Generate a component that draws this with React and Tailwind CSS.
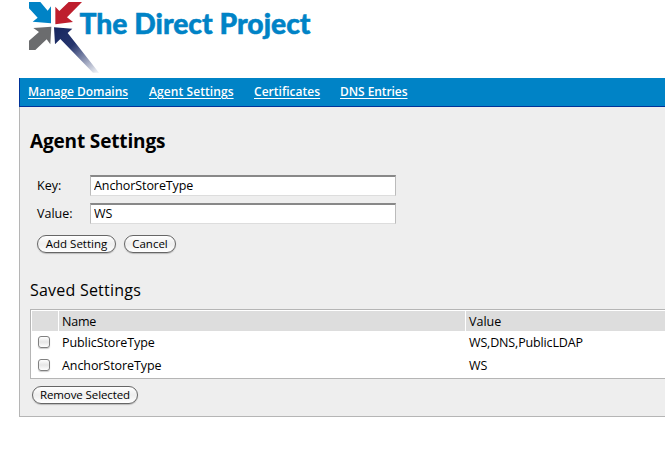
const links = [
  { label: 'Manage Domains', cls: 'w-[121px] tracking-[-0.04px]' },
  { label: 'Agent Settings', cls: 'w-[105px] tracking-[0.08px]' },
  { label: 'Certificates', cls: 'w-[86px] tracking-[0.02px]' },
  { label: 'DNS Entries', cls: 'w-[80px] tracking-[-0.07px]' },
];

const rows = [
  { name: 'PublicStoreType', value: 'WS,DNS,PublicLDAP' },
  { name: 'AnchorStoreType', value: 'WS' },
];

function Logo() {
  return (
    <svg width="320" height="78" viewBox="0 0 320 78" className="block">
      <defs>
        <linearGradient id="tail" gradientUnits="userSpaceOnUse" x1="90" y1="85" x2="212" y2="220">
          <stop offset="0" stopColor="#17265f" />
          <stop offset="0.4" stopColor="#26356d" />
          <stop offset="1" stopColor="#eceef3" />
        </linearGradient>
      </defs>
      <g transform="translate(25 0) scale(0.33333)">
        <path fill="#0083c6" d="M12 6H46L68 32L78 19V70L23 65L38 53L12 25Z" />
        <path fill="#be1e2d" d="M131 6H171L126 52L144 66L91 73V20L103 33Z" />
        <path fill="#6b6c6e" d="M25 84L79 80L76 133L65 118L31 150H12V122L42 96Z" />
        <path fill="url(#tail)" d="M87 82L142 86L128 99L222 218H204L106 117L90 133Z" />
      </g>
      <text x="79.5" y="34" textLength="231" lengthAdjust="spacingAndGlyphs" fontSize="28" strokeWidth="0.5" className="fill-[#0083c6] stroke-[#0083c6] font-['Lato',sans-serif] font-black">The Direct Project</text>
    </svg>
  );
}

function Button({ children, className }) {
  return (
    <button className={`flex h-[18px] items-center justify-center whitespace-nowrap rounded-full border border-[#666] bg-linear-to-b from-white via-[#eee] to-white text-[11.5px] font-medium leading-none shadow-[0_1px_1px_#bbb] ${className}`}>
      {children}
    </button>
  );
}

function Field({ label, value }) {
  return (
    <label className="flex h-7 items-start">
      <span className="w-[53px] pt-px leading-[20px]">{label}</span>
      <input
        defaultValue={value}
        className="h-[21px] w-[306px] border border-t-2 border-[#bbb] border-t-[#888] border-b-[#ddd] bg-white px-[3px] pb-px tracking-[-0.09px] outline-none"
      />
    </label>
  );
}

export default function App() {
  return (
    <div className="h-[464px] w-[665px] overflow-hidden bg-white font-['Open_Sans','Noto_Sans',sans-serif] text-[12.5px] text-black">
      <header className="h-[78px]"><Logo /></header>
      <div className="ml-[19px] h-[339px] border-b border-l border-[#b5b5b5] bg-[#eee]">
        <nav className="-ml-px flex h-[29px] border-b border-l border-[#003399] bg-[#0083c6] pl-2 text-[12px] font-semibold leading-[27px] text-white">
          {links.map((l) => (
            <a key={l.label} className={`block whitespace-nowrap underline underline-offset-2 ${l.cls}`}>{l.label}</a>
          ))}
        </nav>
        <main className="pl-[10px]">
          <h1 className="h-[68px] pt-[21px] text-[19px] font-bold leading-[27px] tracking-[-0.15px]">Agent Settings</h1>
          <form className="pl-[7px]">
            <Field label="Key:" value="AnchorStoreType" />
            <Field label="Value:" value="WS" />
            <div className="flex gap-2 pt-[4px]">
              <Button className="w-[79px]">Add Setting</Button>
              <Button className="w-[52px]">Cancel</Button>
            </div>
          </form>
          <h2 className="h-[56px] pt-[26px] text-[16px] leading-[22px] tracking-[0.22px]">Saved Settings</h2>
          <table className="h-[70px] w-[700px] table-fixed border-separate border-spacing-0 border border-[#b5b5b5] bg-white text-left">
            <thead>
              <tr className="h-[21px]">
                <th className="w-[28px] border-t border-r border-l border-white bg-[#ddd] p-0"></th>
                <th className="w-[407px] border-t border-r border-white bg-[#ddd] py-0 pr-0 pl-[3px] font-normal leading-[19px] tracking-[-0.2px]">Name</th>
                <th className="border-t border-white bg-[#ddd] py-0 pr-0 pl-[3px] font-normal leading-[19px]">Value</th>
              </tr>
            </thead>
            <tbody>
              {rows.map((r) => (
                <tr key={r.name} className="h-[23px]">
                  <td className="p-0 pl-[7px]">
                    <span role="checkbox" aria-checked="false" className="mb-[2px] block h-[12px] w-[12px] rounded-[3px] border border-[#808080] bg-linear-to-b from-white via-[#e6e6e6] to-white shadow-[0_1px_1px_#ccc]" />
                  </td>
                  <td className="py-0 pr-0 pl-[3px] leading-[22px] tracking-[-0.08px]">{r.name}</td>
                  <td className="py-0 pr-0 pl-[3px] leading-[22px] tracking-[-0.15px]">{r.value}</td>
                </tr>
              ))}
            </tbody>
          </table>
          <div className="pt-[7px] pl-[2px]">
            <Button className="w-[106px] tracking-[-0.1px]">Remove Selected</Button>
          </div>
        </main>
      </div>
    </div>
  );
}
